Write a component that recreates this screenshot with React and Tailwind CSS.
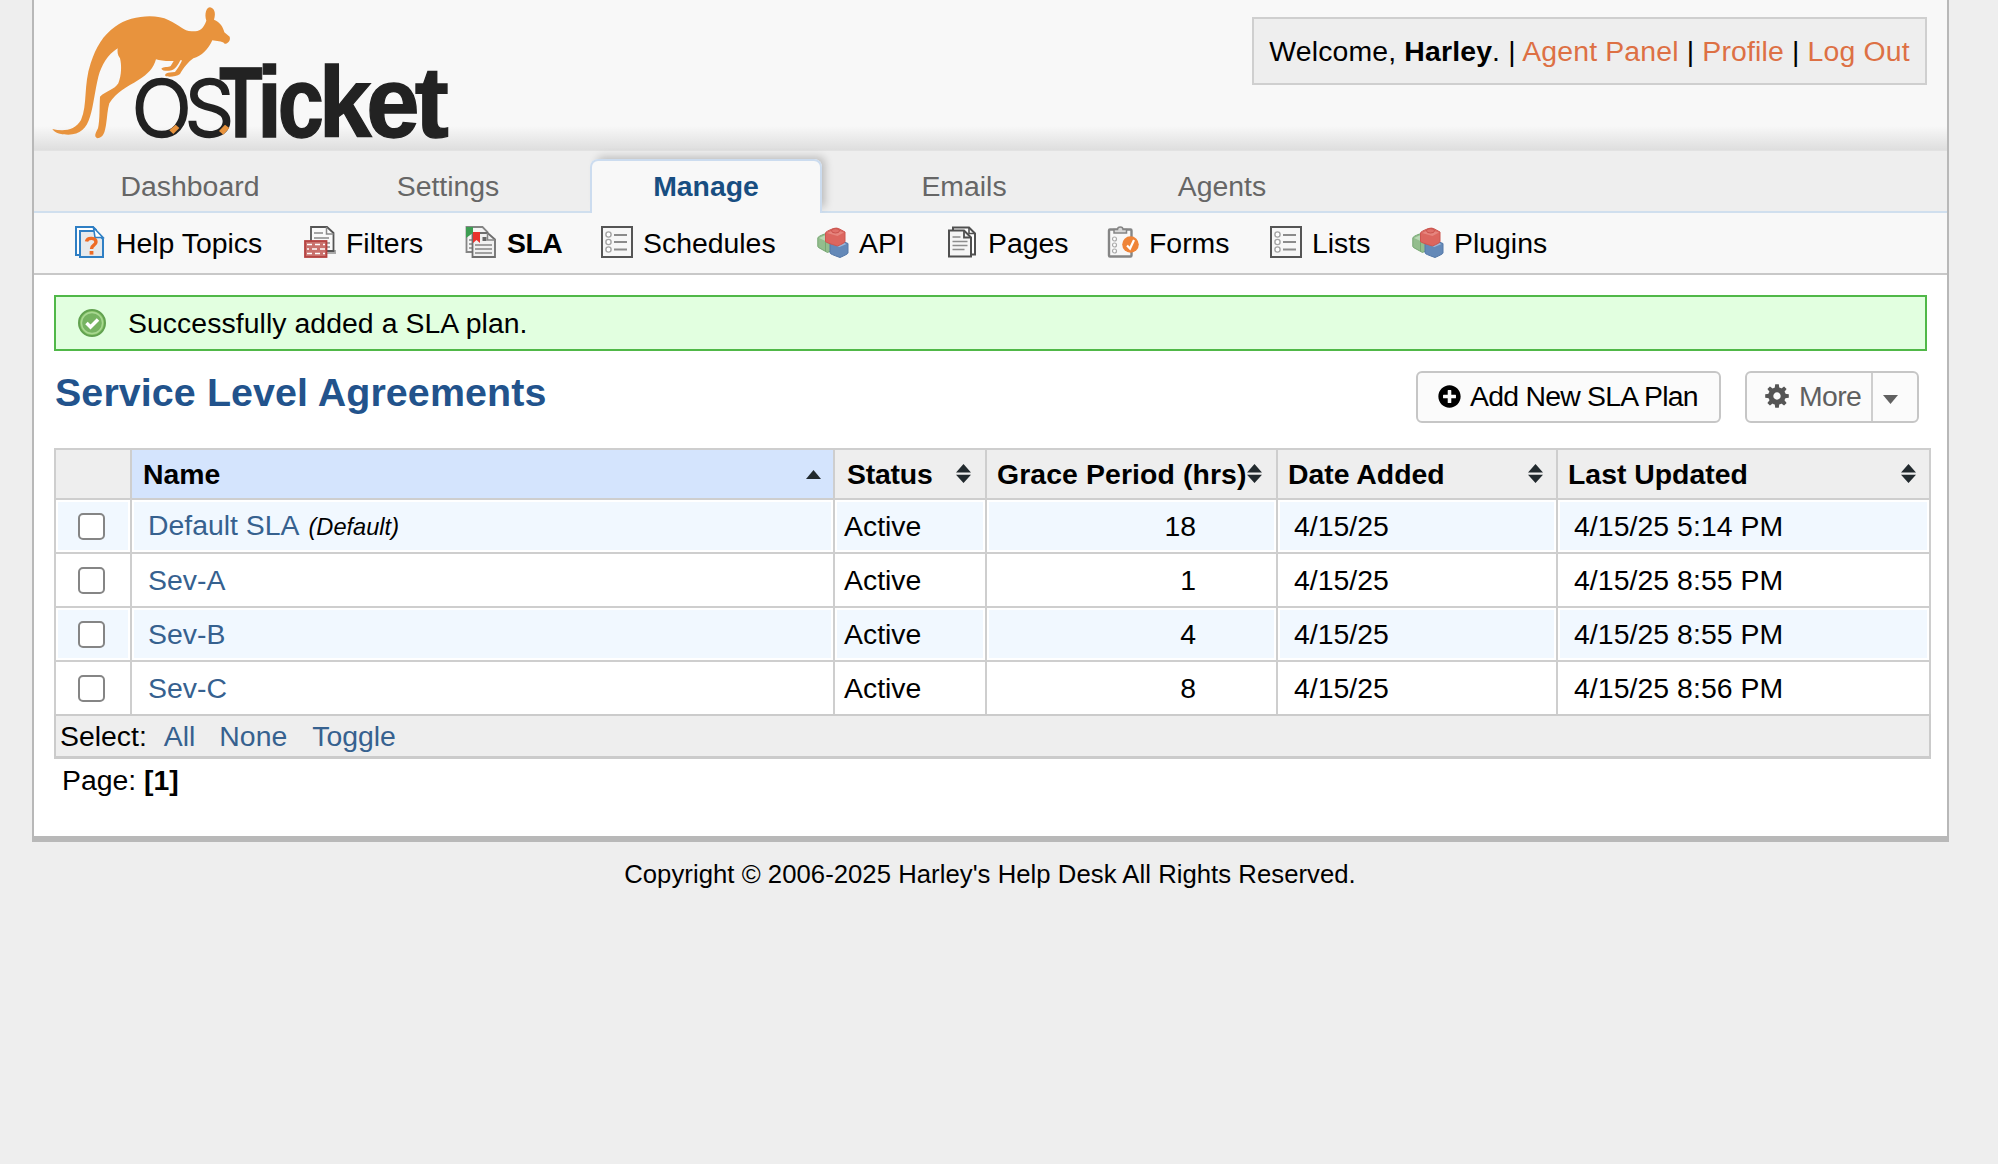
import React from "react";
import { FaPlusCircle } from "react-icons/fa";

const wordmark = [
  ["T", "translate(597.6 410) scale(.713 1)"],
  ["i", "translate(711 410) scale(.905 1)"],
  ["c", "translate(773 410) scale(.834 1)"],
  ["k", "translate(896 410) scale(.955 1)"],
  ["e", "translate(1039 410) scale(.965 1)"],
  ["t", "translate(1184 410) scale(1.03 1)"],
];

function Logo() {
  return (
    <svg viewBox="42 0 1290 450" className="block h-[150px] w-[430px] shrink-0 overflow-visible">
      <path
        fill="#e8933d"
        d="M97 387 C130 395 165 392 183 360 C203 315 190 255 212 190 C228 140 250 105 285 80 C330 47 405 40 445 60 C480 76 490 93 515 94 C537 95 550 88 559 62 C552 40 560 22 570 22 C582 24 589 38 582 59 C600 66 610 82 613 97 L629 110 C633 122 622 132 614 131 C605 122 590 124 577 121 C565 148 545 168 520 175 C505 185 490 205 480 222 C470 230 445 232 436 228 C434 220 440 218 465 216 C472 208 482 192 486 181 L481 181 C474 195 465 208 455 211 C440 214 428 213 424 206 C430 200 445 202 452 198 L461 183 C440 184 420 182 408 178 C400 205 385 222 355 240 C320 262 290 275 268 310 C262 330 262 350 258 375 C254 395 252 412 232 415 C222 410 225 403 234 385 C240 360 238 320 240 290 C255 275 285 268 295 250 C305 225 305 195 300 175 C292 165 292 155 293 145 C262 165 245 195 235 230 C225 270 220 320 210 350 C200 385 180 403 145 404 C125 404 105 400 97 387Z"
      />
      <g fill="#222" stroke="#222" strokeWidth="7" fontFamily="Inter, 'Liberation Sans', sans-serif" fontWeight="300" fontSize="230">
        <text transform="translate(335 409) scale(1.03 1)">O</text>
        <text transform="translate(494 409) scale(1.02 1)">S</text>
      </g>
      <path d="M448 391 L467 374 L478 384 L460 402Z M597 393 L615 374 L628 384 L610 404Z" fill="#e8933d" />
      <g fontFamily="'Liberation Sans', sans-serif" fontWeight="700" fontSize="298" fill="#222" stroke="#222" strokeWidth="4">
        {wordmark.map(([ch, t]) => (
          <text key={ch} transform={t}>
            {ch}
          </text>
        ))}
      </g>
    </svg>
  );
}

const box = "block h-8 w-8 shrink-0";

function HelpIcon() {
  return (
    <svg viewBox="0 0 32 32" className={box}>
      <path d="M2 1h17l3 3v25H2z" fill="#fff" stroke="#2f7fc4" strokeWidth="2" />
      <path d="M6 5h15l8 8v18H6z" fill="#e6e9ec" stroke="#2f7fc4" strokeWidth="2" />
      <path d="M19.500 1.500L29 11.500h-8z" fill="#fff" stroke="#2f7fc4" strokeWidth="1.600" />
      <path d="M12.500 15.500c1-4.500 9.500-4 9.500 .5 0 3.500-4.500 3-4.500 7" fill="none" stroke="#ee6b25" strokeWidth="3.400" />
      <rect x="15.600" y="25" width="3.800" height="3.600" fill="#ee6b25" />
    </svg>
  );
}

function FilterIcon() {
  return (
    <svg viewBox="0 0 32 32" className={box}>
      <path d="M25 24h7v4H22z" fill="#aaa" />
      <path d="M7 1h16l6.500 6v18H7z" fill="#fafafa" stroke="#555" strokeWidth="1.800" />
      <path d="M22.500 1v7h7M10 7h9M10 12h15M22 17h4M22 21h4" fill="none" stroke="#8a8a8a" strokeWidth="1.500" />
      <rect x="1" y="15" width="21.500" height="16" fill="#c9716d" stroke="#b54240" strokeWidth="1.800" />
      <path d="M3 18.500h5M11 18.500h5M19 18.500h2M3 23h2M8 23h5M16 23h5M3 27.500h5M11 27.500h5M19 27.500h2" stroke="#fff" strokeWidth="1.700" />
    </svg>
  );
}

function SlaIcon() {
  return (
    <svg viewBox="0 0 32 32" className={box}>
      <path d="M1.500 1h16l5 5v20h-21z" fill="#f5f5f5" stroke="#858585" strokeWidth="1.800" />
      <path d="M4 14h3M4 18h3M4 22h3" stroke="#888" strokeWidth="1.500" />
      <path d="M7.500 7h15l7.500 6.500v17.500H7.500z" fill="#f1f1f1" stroke="#6f6f6f" strokeWidth="1.800" />
      <path d="M22.500 7v7H30M10 19h17M10 23h17M10 27h17" fill="none" stroke="#858585" strokeWidth="1.500" />
      <rect x="17.500" y="11" width="4" height="4" fill="#666" />
      <path d="M1 1h7v6L1 12z" fill="#3d9d52" />
      <path d="M8 6h7v11l-3.500-3L8 17z" fill="#e8332e" />
    </svg>
  );
}

function ListIcon() {
  return (
    <svg viewBox="0 0 32 32" className={box}>
      <rect x="1" y="1" width="30" height="30" fill="#f7f7f7" stroke="#555" strokeWidth="2" />
      <path d="M13 9h13M13 16h13M13 23.500h13" stroke="#8b8b8b" strokeWidth="2" />
      <g fill="#fff" stroke="#a5a5a5" strokeWidth="1.400">
        <circle cx="7.500" cy="8.500" r="2.600" />
        <circle cx="7.500" cy="16" r="2.600" />
        <circle cx="7.500" cy="23.500" r="2.600" />
      </g>
    </svg>
  );
}

function BlocksIcon() {
  return (
    <svg viewBox="0 0 32 32" className={box}>
      <path d="M.8 12q0-1.500 6.700-4l8 3v13l-5 2.500-9-5q-.7-.5-.7-1.500z" fill="#93bd8d" stroke="#76a772" />
      <path d="M2 12l5.500-2.500L13 12l-4.500 3z" fill="#b9d8b4" />
      <path d="M8.500 15v10" stroke="#76a772" />
      <path d="M13 17.500l9-3.500 9 3.500v9.500q0 1-8 4.500-10-3.500-10-4.500z" fill="#6489b8" stroke="#5478a8" />
      <path d="M14.500 18l7.500-3 7.500 3-7 3z" fill="#9db8da" />
      <path d="M8.500 7q0-1.500 8-4.500 3-.8 5 0l6.500 3.500v9.500q0 1.500-7.500 4.500-12-3.500-12-4.500z" fill="#dc665f" stroke="#cc5650" />
      <path d="M10 7l7.500-3.500L27 6.500 20.500 10z" fill="#e6857e" />
      <ellipse cx="18.500" cy="4.800" rx="4" ry="2.200" fill="#e0706a" stroke="#c9524c" />
    </svg>
  );
}

function PagesIcon() {
  return (
    <svg viewBox="0 0 32 32" className={box}>
      <path d="M7 1.500h16l6 6v21H7z" fill="#fff" stroke="#505050" strokeWidth="2" />
      <path d="M23 1.500v6h6" fill="none" stroke="#505050" strokeWidth="1.600" />
      <path d="M3 4.500h15l7 7v19H3z" fill="#f5f5f5" stroke="#505050" strokeWidth="2" />
      <path d="M18 4.500v7h7" fill="none" stroke="#505050" strokeWidth="1.800" />
      <path d="M6.500 11h8M6.500 15.500h15M6.500 19.500h15M6.500 23.500h12" stroke="#8c8c8c" strokeWidth="1.500" />
    </svg>
  );
}

function FormsIcon() {
  return (
    <svg viewBox="0 0 32 32" className={box}>
      <rect x="2" y="3.500" width="22.500" height="27" rx="1" fill="#f7f7f7" stroke="#858585" strokeWidth="2.400" />
      <path d="M7 3.500h3.500c0-3.500 5.500-3.500 5.500 0h3.500v3.500H7z" fill="#d8d8d8" stroke="#858585" strokeWidth="1.500" />
      <g fill="#fff" stroke="#aaa" strokeWidth="1.200">
        <circle cx="7.500" cy="13" r="2" />
        <circle cx="7.500" cy="19" r="2" />
        <circle cx="7.500" cy="25" r="2" />
      </g>
      <circle cx="23.500" cy="18.500" r="8.300" fill="#ef8438" />
      <path d="M20 19.500l3 3 4-8.500" fill="none" stroke="#fff" strokeWidth="2.200" />
    </svg>
  );
}

function SuccessIcon() {
  return (
    <svg viewBox="0 0 28 28" className="block h-7 w-7 shrink-0">
      <circle cx="14" cy="14" r="13" fill="#8cc76c" stroke="#62a250" strokeWidth="2" />
      <circle cx="14" cy="14" r="10.500" fill="#76b361" stroke="#a9d893" strokeWidth="1.300" />
      <path d="M8.500 14l4 4 7.500-7.500" fill="none" stroke="#fff" strokeWidth="3.500" />
    </svg>
  );
}

function Gear() {
  return (
    <svg viewBox="-12 -12 24 24" className="block h-6 w-6 shrink-0">
      <circle r="6.200" fill="none" stroke="#555" strokeWidth="5" />
      <g fill="#555">
        {[0, 45, 90, 135].map((a) => (
          <path key={a} transform={`rotate(${a})`} d="M-2.300-8l.5-3.800h3.600l.5 3.800zM-2.300 8l.5 3.800h3.600l.5-3.800z" />
        ))}
      </g>
    </svg>
  );
}

function Caret({ up, className = "" }) {
  return (
    <svg viewBox="0 0 15 9" className={`block h-[9px] w-[15px] shrink-0 ${className}`}>
      <path d={up ? "M0 9L7.500 0 15 9z" : "M0 0h15L7.500 9z"} fill="currentColor" />
    </svg>
  );
}

function SortBoth() {
  return (
    <svg viewBox="0 0 15 19" className="mb-0.5 block h-[19px] w-[15px] shrink-0 text-[#222a2e]">
      <path d="M0 8.500L7.500 0 15 8.500zM0 10.700h15L7.500 19z" fill="currentColor" />
    </svg>
  );
}

const tabs = ["Dashboard", "Settings", "Manage", "Emails", "Agents"];

const subnav = [
  ["Help Topics", HelpIcon, "w-[230px]"],
  ["Filters", FilterIcon, "w-[161px]"],
  ["SLA", SlaIcon, "w-[136px]"],
  ["Schedules", ListIcon, "w-[216px]"],
  ["API", BlocksIcon, "w-[129px]"],
  ["Pages", PagesIcon, "w-[161px]"],
  ["Forms", FormsIcon, "w-[163px]"],
  ["Lists", ListIcon, "w-[142px]"],
  ["Plugins", BlocksIcon, "w-[160px]"],
];

const rows = [
  ["Default SLA", "18", "4/15/25 5:14 PM"],
  ["Sev-A", "1", "4/15/25 8:55 PM"],
  ["Sev-B", "4", "4/15/25 8:55 PM"],
  ["Sev-C", "8", "4/15/25 8:56 PM"],
];

const headers = [
  ["Name", "pl-[11px] pr-[12px] bg-[#d4e4fd]"],
  ["Status", "pl-[12px] pr-[14px] tracking-[-0.2px]"],
  ["Grace Period (hrs)", "pl-[10px] pr-[14px] tracking-[0.1px]"],
  ["Date Added", "pl-[10px] pr-[13px]"],
  ["Last Updated", "pl-[10px] pr-[13px] border-r-2"],
];

const cell = "border-t-2 border-l-2 border-[#cecece] p-0";

export default function App() {
  return (
    <div className="min-h-screen w-[1998px] overflow-hidden bg-[#eee] font-['Liberation_Sans',Arial,sans-serif] text-[28.4px] leading-8 whitespace-nowrap text-black">
      <div className="ml-8 h-[842px] w-[1917px] border-x-2 border-b-[6px] border-[#b8b8b8] bg-white">
        <header className="flex h-[151px] items-start justify-between border-b border-[#e2e2e2] bg-[linear-gradient(to_bottom,#f8f8f8_0,#f8f8f8_126px,#dedede_150px)]">
          <Logo />
          <div className="mt-[17px] mr-5 flex h-[68px] w-[675px] items-center justify-center border-2 border-[#cfcfcf] bg-[#eee] tracking-[0.16px]">
            <p>
              Welcome, <b>Harley</b>. | <a className="text-[#dd7044]">Agent Panel</a> | <a className="text-[#dd7044]">Profile</a> |{" "}
              <a className="text-[#dd7044]">Log Out</a>
            </p>
          </div>
        </header>

        <nav className="flex h-[62px] items-end gap-[26px] border-b-2 border-[#d0dfee] bg-[#eee] pl-10 text-[#666]">
          {tabs.map((t) =>
            t === "Manage" ? (
              <div key={t} className="-mb-0.5 h-[54px] w-[232px] rounded-t-lg bg-[#f8f8f8] shadow-[5px_-4px_9px_-2px_rgba(0,0,0,0.22)] [clip-path:inset(-12px_-14px_0_-4px)]">
                <div className="flex h-full justify-center rounded-t-lg border-2 border-b-0 border-[#ccdcef] pt-[9px] font-bold text-[#184e81]">
                  {t}
                </div>
              </div>
            ) : (
              <div key={t} className="flex h-[52px] w-[232px] justify-center pt-[11px]">
                {t}
              </div>
            )
          )}
        </nav>

        <nav className="flex h-[62px] items-start border-b-2 border-[#c8c8c8] bg-[#f8f8f8] pt-[13px] pl-10">
          {subnav.map(([label, Icon, w]) => (
            <div key={label} className={`flex gap-[10px] ${w} ${label === "SLA" ? "font-bold tracking-[-0.5px]" : ""}`}>
              <Icon />
              <span className="pt-px">{label}</span>
            </div>
          ))}
        </nav>

        <main className="pt-5 pl-5">
          <div className="flex h-14 w-[1873px] items-center border-2 border-[#50b848] bg-[#e2ffe0] pl-[22px]">
            <SuccessIcon />
            <span className="ml-[22px] tracking-[0.06px]">Successfully added a SLA plan.</span>
          </div>

          <div className="flex h-[97px] items-start justify-between pt-5 pr-7">
            <h1 className="pt-[5px] pl-px text-[39.4px] font-bold tracking-[0.1px] text-[#22538c]">Service Level Agreements</h1>
            <div className="flex gap-6">
              <button className="flex h-[52px] w-[305px] items-center gap-[9px] rounded-md border-2 border-[#c6c6c6] bg-[#fbfbfb] pb-0.5 pl-5">
                <FaPlusCircle className="h-[23px] w-[23px] shrink-0" />
                <span className="tracking-[-0.75px]">Add New SLA Plan</span>
              </button>
              <div className="flex h-[52px] w-[174px] rounded-md border-2 border-[#c6c6c6] bg-[#fbfbfb] text-[#606060]">
                <button className="flex w-[126px] items-center gap-[10px] border-r-2 border-[#cecece] pb-0.5 pl-[18px] tracking-[-0.6px]">
                  <Gear />
                  More
                </button>
                <button className="flex flex-1 items-center pt-1 pl-[10px]">
                  <Caret />
                </button>
              </div>
            </div>
          </div>

          <table className="w-[1877px] table-fixed border-separate border-spacing-0">
            <colgroup>
              <col className="w-[76px]" />
              <col className="w-[703px]" />
              <col className="w-[152px]" />
              <col className="w-[291px]" />
              <col className="w-[280px]" />
              <col className="w-[375px]" />
            </colgroup>
            <thead>
              <tr className="h-[50px] bg-[#eee]">
                <th className={cell} />
                {headers.map(([h, c]) => (
                  <th key={h} className={`border-t-2 border-l-2 border-[#cecece] py-0 ${c}`}>
                    <div className="flex items-center justify-between">
                      {h}
                      {h === "Name" ? <Caret up className="text-[#222a2e]" /> : <SortBoth />}
                    </div>
                  </th>
                ))}
              </tr>
            </thead>
            <tbody>
              {rows.map(([name, hrs, updated], i) => {
                const c = `${cell} shadow-[inset_0_0_0_2px_#fff] ${i % 2 ? "bg-white" : "bg-[#f1f8ff]"}`;
                return (
                  <tr key={name} className="h-[54px]">
                    <td className={c}>
                      <input
                        type="checkbox"
                        className="mt-px ml-[22px] block h-[27px] w-[27px] appearance-none rounded-[5px] border-2 border-[#858585] bg-white"
                      />
                    </td>
                    <td className={c}>
                      <a className="ml-4 text-[#36618f]">{name}</a>
                      {i === 0 && <i className="ml-[9px] text-[23.600px]">(Default)</i>}
                    </td>
                    <td className={c}>
                      <span className="ml-[9px]">Active</span>
                    </td>
                    <td className={`${c} text-right`}>
                      <span className="mr-[80px]">{hrs}</span>
                    </td>
                    <td className={c}>
                      <span className="ml-4">4/15/25</span>
                    </td>
                    <td className={`${c} border-r-2`}>
                      <span className="ml-4 tracking-[0.06px]">{updated}</span>
                    </td>
                  </tr>
                );
              })}
            </tbody>
            <tfoot>
              <tr className="h-[45px] bg-[#eee]">
                <td colSpan={6} className="border-2 border-b-[3px] border-[#cbcbcb] p-0 pl-1">
                  <div className="flex items-center">
                    Select:
                    <a className="ml-[17px] text-[#36618f]">All</a>
                    <a className="ml-[24px] text-[#36618f]">None</a>
                    <a className="ml-[25px] text-[#36618f]">Toggle</a>
                  </div>
                </td>
              </tr>
            </tfoot>
          </table>

          <div className="pt-[5px] pl-2">
            Page: <b>[1]</b>
          </div>
        </main>
      </div>

      <footer className="w-[1980px] pt-4 text-center text-[25.700px] tracking-[0.04px]">
        Copyright © 2006-2025 Harley's Help Desk All Rights Reserved.
      </footer>
    </div>
  );
}
